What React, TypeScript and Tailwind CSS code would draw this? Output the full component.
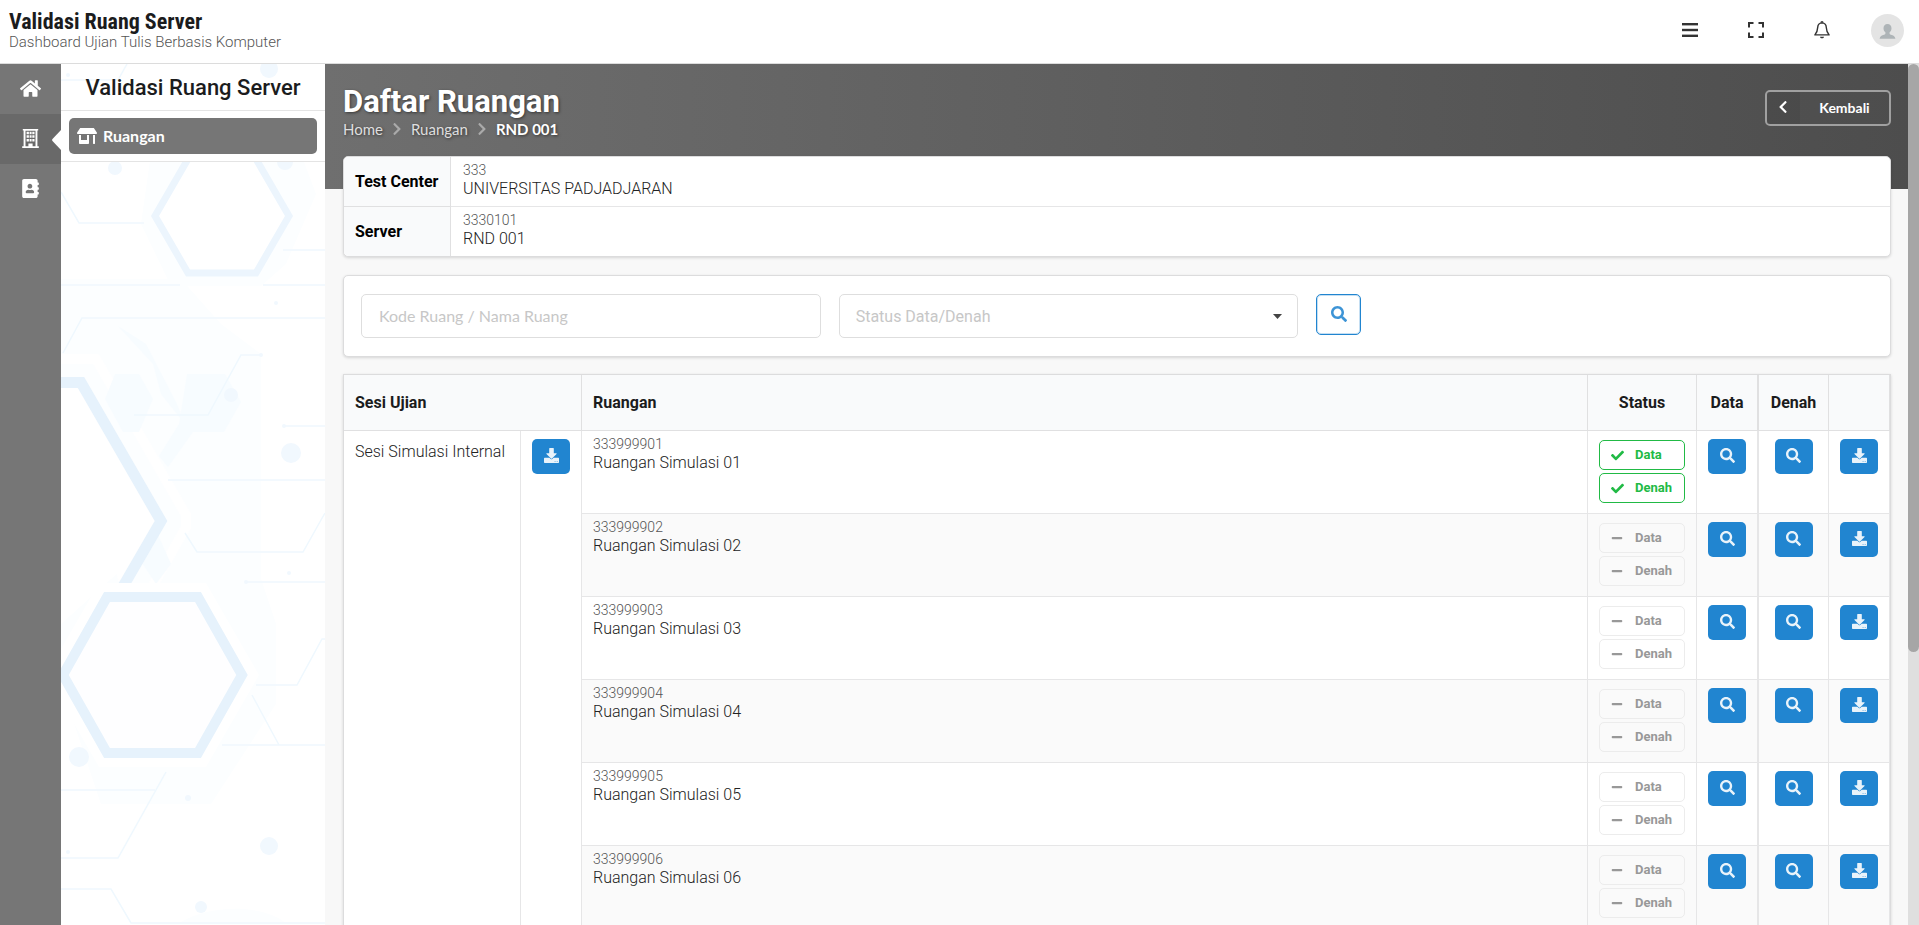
import React from "react";
import {
  FaAddressBook,
  FaCheck,
  FaChevronLeft,
  FaChevronRight,
  FaHome,
  FaMinus,
  FaSearch,
  FaStoreAlt,
} from "react-icons/fa";

type Room = { code: string; name: string; valid: boolean };

const rooms: Room[] = [
  { code: "333999901", name: "Ruangan Simulasi 01", valid: true },
  { code: "333999902", name: "Ruangan Simulasi 02", valid: false },
  { code: "333999903", name: "Ruangan Simulasi 03", valid: false },
  { code: "333999904", name: "Ruangan Simulasi 04", valid: false },
  { code: "333999905", name: "Ruangan Simulasi 05", valid: false },
  { code: "333999906", name: "Ruangan Simulasi 06", valid: false },
];

function MenuIcon() {
  return (
    <svg width="16" height="16" viewBox="0 0 16 16" fill="#333">
      <rect x="0" y="1" width="16" height="2.4" />
      <rect x="0" y="6.8" width="16" height="2.4" />
      <rect x="0" y="12.6" width="16" height="2.4" />
    </svg>
  );
}

function ExpandIcon() {
  return (
    <svg width="16" height="16" viewBox="0 0 16 16" fill="none" stroke="#333" strokeWidth="2">
      <path d="M1 5.5V1h4.500M10.500 1H15v4.500M15 10.500V15h-4.500M5.500 15H1v-4.500" />
    </svg>
  );
}

function BellIcon() {
  return (
    <svg width="16" height="18" viewBox="0 0 16 18" fill="none" stroke="#333" strokeWidth="1.400" strokeLinejoin="round">
      <path d="M8 1.900C5.200 2 3.800 4 3.700 6.400 3.600 9.900 3 11.400 0.900 13.900H15.100C13 11.400 12.400 9.900 12.300 6.400 12.200 4 10.800 2 8 1.900Z" />
      <path d="M7.100 1.800C7.100 0.400 8.900 0.400 8.900 1.800" />
      <path d="M6 15.800H10C9.700 17.800 6.300 17.800 6 15.800Z" fill="#333" stroke="none" />
    </svg>
  );
}

function AvatarIcon() {
  return (
    <svg width="33" height="33" viewBox="0 0 33 33">
      <circle cx="16.500" cy="16.500" r="16.500" fill="#e4e4e4" />
      <path
        d="M16.500 10c2.500 0 4 1.800 4 4.200 0 1.700-.7 3.300-1.900 4.100v1.200c0 .7.500 1 1.300 1.300 2.400.7 4.200 1.500 4.500 4H8.600c.3-2.500 2.100-3.300 4.500-4 .8-.3 1.300-.6 1.300-1.300v-1.200c-1.200-.8-1.900-2.400-1.900-4.100 0-2.400 1.500-4.200 4-4.200z"
        fill="#aeb4b7"
      />
    </svg>
  );
}

function BuildingIcon() {
  return (
    <svg width="17" height="19" viewBox="0 0 17 19" fill="#fff" aria-hidden="true">
      <path
        fillRule="evenodd"
        d="M0.800 0H16.200V1.500H15.400V17.300H16.800V19H0.200V17.300H1.600V1.500H0.800ZM3.500 1.700V17.300H6.400V14.400H10.600V17.300H13.500V1.700Z"
      />
      <path d="M4.600 2.700H6.900V5.200H4.600ZM7.600 2.700H9.600V5.200H7.600ZM10.300 2.700H12.500V5.200H10.300ZM4.600 6.300H6.900V8.800H4.600ZM7.600 6.300H9.600V8.800H7.600ZM10.300 6.300H12.500V8.800H10.300ZM4.600 10H6.900V12.500H4.600ZM7.600 10H9.600V12.500H7.600ZM10.300 10H12.500V12.500H10.300Z" />
    </svg>
  );
}

function DownloadIcon() {
  return (
    <svg width="15" height="15" viewBox="0 0 15 15" fill="currentColor" aria-hidden="true">
      <path d="M5.700 0H9.300Q9.800 0 9.800 .5V5.300H12.200Q13.100 5.400 12.500 6.100L8 10.500Q7.500 10.900 7 10.500L2.500 6.100Q1.900 5.400 2.800 5.300H5.200V.5Q5.200 0 5.700 0Z" />
      <path
        fillRule="evenodd"
        d="M.7 9.700H5.400L6.700 10.900Q7.500 11.600 8.300 10.900L9.600 9.700H14.300Q15 9.700 15 10.400V14.300Q15 15 14.300 15H.7Q0 15 0 14.300V10.400Q0 9.700 .7 9.700ZM10.700 13.200H11.400V13.900H10.700ZM12.800 13.200H13.500V13.900H12.800Z"
      />
    </svg>
  );
}

function HexagonBackdrop() {
  return (
    <svg
      className="absolute inset-0 h-full w-full"
      viewBox="0 0 264 861"
      preserveAspectRatio="xMinYMin slice"
      fill="none"
      aria-hidden="true"
    >
      <g fill="#fcfeff">
        <path d="M90 90L240 90 255 130 225 200 200 222 110 222 80 160Z" />
        <path d="M0 215L120 215 160 260 200 290 200 560 120 560 0 320Z" />
        <path d="M100 470L185 470 215 560 215 640 150 740 40 740 0 620 0 560Z" />
        <path d="M118 859C150 840 200 840 225 859Z" />
      </g>
      <path d="M0 295L35 295 125 451 125 463 90 525" stroke="#fff" strokeWidth="10" />
      <g fill="#f7fcff">
        <path d="M57 262L85 280 116 340 124 360 100 330 92 300Z" />
        <path d="M54 310L78 310 92 335 78 368 62 368 44 335Z" />
        <path d="M126 310L164 310 180 338 163 368 132 368 107 403 98 392 118 360Z" />
        <path d="M62 470L90 455 110 500 95 520Z" />
      </g>
      <g stroke="#eff8fe" strokeWidth="1.500">
        <path d="M0 16H57L66 0" />
        <path d="M0 128L18 159H83" />
        <path d="M222 186H264M0 221H119M202 221H264" />
        <path d="M2 289L21 254H264" />
        <path d="M73 351H147L180 291H200M222 362H264M107 416H264" />
        <path d="M124 469L136 488H242L260 456L264 449" />
        <path d="M185 518H264M195 621H236L261 575H264" />
        <path d="M191 631L218 681M161 681H264" />
        <path d="M0 726H94M105 708L57 794H0" />
        <path d="M0 825H50L70 859H264" />
        <path d="M222 105L232 88" />
      </g>
      <g fill="#f1f8fe">
        <circle cx="208" cy="5" r="9" />
        <circle cx="7" cy="11" r="2" />
        <circle cx="54" cy="104" r="7" />
        <circle cx="224" cy="98" r="8" />
        <circle cx="230" cy="389" r="10" />
        <circle cx="170" cy="331" r="7" />
        <circle cx="200" cy="291" r="2" />
        <circle cx="223" cy="362" r="2" />
        <circle cx="215" cy="239" r="2" />
        <circle cx="18" cy="693" r="10" />
        <circle cx="127" cy="734" r="3" />
        <circle cx="208" cy="782" r="9" />
        <circle cx="7" cy="788" r="2" />
        <circle cx="140" cy="843" r="6" />
        <circle cx="185" cy="518" r="2" />
        <circle cx="228" cy="509" r="2" />
      </g>
      <path d="M127 95L94 152 127 209H195L228 152 195 95" fill="#fff" stroke="#ecf5fd" strokeWidth="7" />
      <path d="M0 318.500H20L100 457L60 526" fill="#fff" stroke="#e6f2fc" strokeWidth="11" />
      <path d="M38 519H145L198 611 145 703H38L-15 611Z" fill="#fff" />
      <path d="M46 533H137L181 611 137 689H46L2 611Z" fill="#fefeff" stroke="#e6f2fc" strokeWidth="10" />
    </svg>
  );
}

function StatusLabel({ text, valid }: { text: string; valid: boolean }) {
  return (
    <div
      className={
        valid
          ? "flex h-[30px] w-[86px] items-center rounded-[5px] border border-[#21ba45] bg-white pl-[11px] text-[13px] font-bold text-[#21ba45]"
          : "flex h-[30px] w-[86px] items-center rounded-[5px] border border-[#ececec] pl-[11px] text-[13px] font-bold text-[#989898]"
      }
    >
      <span className="w-6 shrink-0">{valid ? <FaCheck size={13} /> : <FaMinus size={12} />}</span>
      {text}
    </div>
  );
}

function ActionButton({ kind, label }: { kind: "search" | "download"; label: string }) {
  return (
    <button
      type="button"
      aria-label={label}
      className="mx-auto flex h-[35px] w-[38px] items-center justify-center rounded-[5px] bg-[#2185d0] pb-[3px] text-[#e9f3fa]"
    >
      {kind === "search" ? <FaSearch size={15} /> : <DownloadIcon />}
    </button>
  );
}

function CodeName({ code, name }: { code: string; name: string }) {
  return (
    <>
      <div className="text-[14px] leading-[18px] text-[#555]">{code}</div>
      <div className="text-[16px] leading-[20px]">{name}</div>
    </>
  );
}

export default function App() {
  return (
    <div className="flex h-screen flex-col overflow-hidden bg-[#f8f8f8] font-['Roboto',sans-serif] font-light text-[#222]">
      <header className="flex h-16 shrink-0 items-center justify-between border-b border-[#dcdcdc] bg-white pr-[15px] pl-[9px]">
        <div className="pb-[3px]">
          <div className="font-['Roboto_Condensed','Roboto',sans-serif] text-[22px] leading-[24px] font-bold text-[#1b1c1d]">
            Validasi Ruang Server
          </div>
          <div className="text-[15px] leading-[16px] text-[#555]">Dashboard Ujian Tulis Berbasis Komputer</div>
        </div>
        <nav className="flex items-center gap-[41px] pb-[3px]">
          <div className="flex items-center gap-[50px]">
            <button type="button" aria-label="Menu">
              <MenuIcon />
            </button>
            <button type="button" aria-label="Layar penuh">
              <ExpandIcon />
            </button>
            <button type="button" aria-label="Notifikasi">
              <BellIcon />
            </button>
          </div>
          <button type="button" aria-label="Akun">
            <AvatarIcon />
          </button>
        </nav>
      </header>

      <div className="flex min-h-0 flex-1">
        <nav className="w-[61px] shrink-0 bg-[#767676] text-white">
          <a href="#home" aria-label="Home" className="flex h-[50px] items-center justify-center pb-[2px]">
            <FaHome size={21} />
          </a>
          <a
            href="#ruang"
            aria-label="Ruang"
            className="relative flex h-[50px] items-center justify-center bg-[#696969] pb-[2px]"
          >
            <BuildingIcon />
            <svg className="absolute top-4 right-0" width="9" height="20" viewBox="0 0 9 20" fill="#fff" aria-hidden="true">
              <path d="M9 0V20L0.500 11Q-0.300 10 0.500 9Z" />
            </svg>
          </a>
          <a href="#kontak" aria-label="Kontak" className="flex h-[50px] items-center justify-center pb-[2px]">
            <FaAddressBook size={19} />
          </a>
        </nav>

        <aside className="relative w-[264px] shrink-0 overflow-hidden bg-white">
          <HexagonBackdrop />
          <div className="relative">
            <h2 className="flex h-[47px] items-center justify-center border-b border-[#e4e4e4] text-[22px] font-medium text-[#1b1c1d]">
              Validasi Ruang Server
            </h2>
            <div className="border-b border-[#e4e4e4] bg-white px-2 py-[7px]">
              <a
                href="#ruangan"
                className="flex h-9 items-center gap-[6px] rounded-[5px] bg-[#767676] pl-2 font-['Lato',sans-serif] text-[16px] font-bold text-white"
              >
                <FaStoreAlt size={20} />
                Ruangan
              </a>
            </div>
          </div>
        </aside>

        <main className="min-w-0 flex-1 overflow-hidden">
          <div className="h-[125px] bg-linear-to-r from-[#6f6f6f] to-[#4d4d4d] pt-[19px] pr-[17px] pl-[18px]">
            <div className="flex items-start justify-between">
              <div className="[text-shadow:1px_1px_3px_rgba(0,0,0,0.5)]">
                <h1 className="text-[31px] leading-[37px] font-bold text-white">Daftar Ruangan</h1>
                <nav className="flex items-center font-['Lato',sans-serif] text-[15px] leading-[18px] font-normal text-[#dedede]">
                  <a href="#home">Home</a>
                  <FaChevronRight size={14} className="mx-[7px] text-[#aaa]" />
                  <a href="#ruangan">Ruangan</a>
                  <FaChevronRight size={14} className="mx-[7px] text-[#aaa]" />
                  <span className="font-bold text-white">RND 001</span>
                </nav>
              </div>
              <button
                type="button"
                className="mt-[7px] flex h-9 w-[126px] items-stretch rounded-[5px] border-2 border-[#a0a0a0] font-['Lato',sans-serif] text-[14px] font-bold text-white"
              >
                <span className="flex w-[33px] items-center justify-center bg-black/5 pr-[2px] pb-[2px]">
                  <FaChevronLeft size={14} />
                </span>
                <span className="flex flex-1 items-center justify-center pb-[2px]">Kembali</span>
              </button>
            </div>
          </div>

          <div className="relative -mt-[33px] space-y-[18px] pr-[17px] pl-[18px]">
            <div className="rounded-[5px] border border-[#dcdcdd] bg-white shadow-[0_1px_3px_rgba(0,0,0,0.14)]">
              <table className="w-full border-separate border-spacing-0 text-left">
                <tbody>
                  <tr className="h-[50px]">
                    <th className="w-[107px] rounded-tl-[5px] border-r border-b border-[#e0e0e1] bg-[#f9fafb] pl-[11px] text-[16px] font-bold whitespace-nowrap text-black">
                      Test Center
                    </th>
                    <td className="border-b border-[#e6e6e7] px-3 pt-1 pb-[7px]">
                      <CodeName code="333" name="UNIVERSITAS PADJADJARAN" />
                    </td>
                  </tr>
                  <tr className="h-[49px]">
                    <th className="rounded-bl-[5px] border-r border-[#e0e0e1] bg-[#f9fafb] pl-[11px] text-[16px] font-bold text-black">
                      Server
                    </th>
                    <td className="px-3 pt-1 pb-[7px]">
                      <CodeName code="3330101" name="RND 001" />
                    </td>
                  </tr>
                </tbody>
              </table>
            </div>

            <form className="flex h-[82px] items-start gap-[18px] rounded-[5px] border border-[#dcdcdd] bg-white px-[17px] pt-[18px] shadow-[0_1px_3px_rgba(0,0,0,0.14)]">
              <input
                type="text"
                aria-label="Kode Ruang / Nama Ruang"
                placeholder="Kode Ruang / Nama Ruang"
                className="h-[44px] w-[30.400%] rounded-[5px] border border-[#dedede] bg-white px-[17px] pb-[2px] font-['Lato',sans-serif] text-[16px] font-normal outline-none placeholder:text-[#c7c7c7]"
              />
              <div className="relative w-[30.400%]">
                <select
                  aria-label="Status Data/Denah"
                  defaultValue=""
                  className="h-[44px] w-full appearance-none rounded-[5px] border border-[#dedede] bg-white px-4 pt-[2px] text-[16px] font-normal text-[#c7c7c7] outline-none"
                >
                  <option value="">Status Data/Denah</option>
                </select>
                <svg
                  className="pointer-events-none absolute top-5 right-4"
                  width="9"
                  height="5"
                  viewBox="0 0 9 5"
                  fill="#444"
                  aria-hidden="true"
                >
                  <path d="M0 0H9L4.500 5Z" />
                </svg>
              </div>
              <button
                type="button"
                aria-label="Cari"
                className="flex h-[41px] w-[45px] items-center justify-center rounded-[5px] border border-[#2185d0] pb-[1px] text-[#3d94d6] shadow-[inset_0_0_0_1px_#c4def2]"
              >
                <FaSearch size={16} />
              </button>
            </form>

            <table className="-mt-px w-full border-separate border-spacing-0 border border-[#dcdcdd] bg-white text-left text-[16px] shadow-[0_1px_3px_rgba(0,0,0,0.14)]">
              <thead>
                <tr className="h-[56px] bg-[#f9fafb] text-[#1b1c1d]">
                  <th colSpan={2} className="border-r border-b border-[#e0e0e1] px-[11px] font-bold">
                    Sesi Ujian
                  </th>
                  <th className="w-full border-r border-b border-[#e0e0e1] px-[11px] font-bold">Ruangan</th>
                  <th className="border-r border-b border-[#e0e0e1] px-[11px] text-center font-bold">Status</th>
                  <th className="border-r-2 border-b border-[#e0e0e1] px-[11px] text-center font-bold">Data</th>
                  <th className="min-w-[70px] border-r border-b border-[#e0e0e1] px-[11px] text-center font-bold">Denah</th>
                  <th className="border-r border-b border-[#e0e0e1] px-[11px]" aria-label="Unduh" />
                </tr>
              </thead>
              <tbody>
                {rooms.map((room, index) => (
                  <tr key={room.code} className="h-[83px] align-top even:bg-[#fafafa]">
                    {index === 0 && (
                      <>
                        <td rowSpan={rooms.length} className="border-r border-[#e6e6e7] bg-white px-[11px] pt-[11px] whitespace-nowrap">
                          <div className="w-[154px] leading-[20px]">Sesi Simulasi Internal</div>
                        </td>
                        <td rowSpan={rooms.length} className="border-r border-[#e6e6e7] bg-white px-[11px] pt-2">
                          <ActionButton kind="download" label="Unduh sesi" />
                        </td>
                      </>
                    )}
                    <td className="border-r border-b border-[#e6e6e7] px-[11px] pt-1">
                      <CodeName code={room.code} name={room.name} />
                    </td>
                    <td className="border-r border-b border-[#e6e6e7] px-[11px] pt-[9px]">
                      <div className="flex flex-col gap-[3px]">
                        <StatusLabel text="Data" valid={room.valid} />
                        <StatusLabel text="Denah" valid={room.valid} />
                      </div>
                    </td>
                    <td className="border-r-2 border-b border-[#e6e6e7] px-[11px] pt-2">
                      <ActionButton kind="search" label="Lihat data" />
                    </td>
                    <td className="border-r border-b border-[#e6e6e7] px-[11px] pt-2">
                      <ActionButton kind="search" label="Lihat denah" />
                    </td>
                    <td className="border-r border-b border-[#e6e6e7] px-[11px] pt-2">
                      <ActionButton kind="download" label="Unduh ruangan" />
                    </td>
                  </tr>
                ))}
              </tbody>
            </table>
          </div>
        </main>

        <div className="w-[11px] shrink-0 bg-[#dfdfdf]">
          <div className="h-[68.300%] rounded-full bg-[#a6a6a6]" />
        </div>
      </div>
    </div>
  );
}
